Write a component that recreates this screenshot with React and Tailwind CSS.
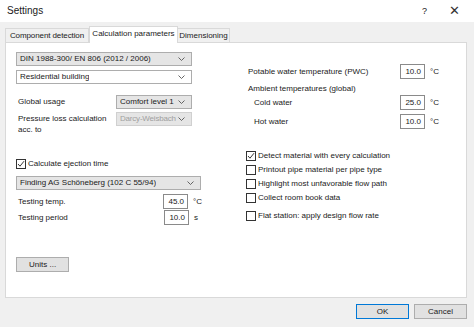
import React from "react";

function Chevron() {
    return (
        <svg width="7" height="4" viewBox="0 0 7 4" className="shrink-0">
            <polyline points="0.5,0.5 3.5,3.5 6.5,0.5" fill="none" stroke="#555" strokeWidth="0.9" />
        </svg>
    );
}

function Select({ label, className, disabled }) {
    return (
        <div className={"flex items-center justify-between gap-[2px] h-[14px] border pl-[3px] pr-[6px] whitespace-nowrap " + className}>
            <span className={"min-w-0 overflow-hidden " + (disabled ? "text-[#a0a0a0] tracking-[-0.2px]" : "text-[#1a1a1a]")}>{label}</span>
            <Chevron />
        </div>
    );
}

function Check({ checked, label }) {
    return (
        <div className="flex items-center gap-[2px] h-[11px] whitespace-nowrap">
            <div className="w-[10px] h-[10px] border border-[#333] bg-white flex items-center justify-center shrink-0">
                {checked && (
                    <svg width="8" height="8" viewBox="0 0 8 8">
                        <polyline points="1,4 3,6.2 7,1.2" fill="none" stroke="#222" strokeWidth="0.9" />
                    </svg>
                )}
            </div>
            <span>{label}</span>
        </div>
    );
}

function NumBox({ value, unit }) {
    return (
        <div className="flex items-center">
            <div className="w-[25px] h-[15px] border border-[#8a8a8a] bg-white flex items-center justify-end pr-[3px]">{value}</div>
            <span className="ml-[5px]">{unit}</span>
        </div>
    );
}

export default function App() {
    return (
        <div className="w-[474px] h-[327px] flex flex-col bg-[#f0f0f0] text-[8px] leading-[10px] text-[#1a1a1a] overflow-hidden" style={{ fontFamily: '"Liberation Sans", Arial, sans-serif' }}>
            {/* title bar */}
            <div className="h-[22px] bg-white flex items-center pl-[7px] pr-[14px] shrink-0">
                <span className="text-[10px]">Settings</span>
                <span className="ml-auto text-[9px]">?</span>
                <span className="ml-[22px] text-[13px] font-light text-[#333]">✕</span>
            </div>

            <div className="flex-1 pl-[5px] pr-[7px] flex flex-col">
                {/* tabs */}
                <div className="h-[20px] flex items-end whitespace-nowrap">
                    <div className="w-[84px] h-[14px] flex items-center justify-center border border-b-0 border-[#d9d9d9] bg-[#f0f0f0] tracking-[-0.1px]">Component detection</div>
                    <div className="w-[89px] h-[17px] flex items-start justify-center pt-[2px] border border-b-0 border-[#d9d9d9] bg-white -mb-px relative z-10">Calculation parameters</div>
                    <div className="w-[52px] h-[14px] flex items-center justify-center border border-b-0 border-l-0 border-[#d9d9d9] bg-[#f0f0f0]">Dimensioning</div>
                </div>

                {/* panel */}
                <div className="h-[256px] bg-white border border-[#d9d9d9] flex pl-[10px]">
                    {/* left column */}
                    <div className="w-[186px] flex flex-col pt-[9px]">
                        <Select label="DIN 1988-300/ EN 806 (2012 / 2006)" className="w-[176px] bg-[#e5e5e5] border-[#adadad]" />
                        <Select label="Residential building" className="w-[176px] mt-[4px] bg-white border-[#adadad]" />
                        <div className="flex items-center mt-[11px]">
                            <span className="w-[100px] pl-[2px]">Global usage</span>
                            <Select label="Comfort level 1" className="w-[76px] bg-[#e5e5e5] border-[#adadad]" />
                        </div>
                        <div className="flex items-start mt-[3px]">
                            <span className="w-[100px] pl-[2px] leading-[11px] pt-[1px]">Pressure loss calculation<br />acc. to</span>
                            <Select label="Darcy-Weisbach" disabled className="w-[76px] bg-[#e5e5e5] border-[#d0d0d0]" />
                        </div>
                        <div className="mt-[23px]">
                            <Check checked label="Calculate ejection time" />
                        </div>
                        <Select label="Finding AG Schöneberg (102 C 55/94)" className="w-[185px] mt-[7px] bg-[#e5e5e5] border-[#adadad]" />
                        <div className="flex items-center mt-[4px]">
                            <span className="w-[148px] pl-[2px]">Testing temp.</span>
                            <NumBox value="45.0" unit="°C" />
                        </div>
                        <div className="flex items-center mt-px">
                            <span className="w-[148px] pl-[2px]">Testing period</span>
                            <NumBox value="10.0" unit="s" />
                        </div>
                        <div className="mt-[32px] w-[53px] h-[15px] bg-[#e1e1e1] border border-[#adadad] flex items-center pl-[12px]">Units ...</div>
                    </div>

                    {/* right column */}
                    <div className="flex-1 flex flex-col pl-[44px] pt-[21px]">
                        <div className="flex items-center">
                            <span className="w-[154px] pl-[2px]">Potable water temperature (PWC)</span>
                            <NumBox value="10.0" unit="°C" />
                        </div>
                        <span className="pl-[2px] mt-[5px]">Ambient temperatures (global)</span>
                        <div className="flex items-center mt-[1px]">
                            <span className="w-[154px] pl-[8px]">Cold water</span>
                            <NumBox value="25.0" unit="°C" />
                        </div>
                        <div className="flex items-center mt-[4px]">
                            <span className="w-[154px] pl-[8px]">Hot water</span>
                            <NumBox value="10.0" unit="°C" />
                        </div>
                        <div className="flex flex-col gap-[3px] mt-[21px]">
                            <Check checked label="Detect material with every calculation" />
                            <Check label="Printout pipe material per pipe type" />
                            <Check label="Highlight most unfavorable flow path" />
                            <Check label="Collect room book data" />
                        </div>
                        <div className="mt-[7px]">
                            <Check label="Flat station: apply design flow rate" />
                        </div>
                    </div>
                </div>

                {/* footer */}
                <div className="flex justify-end gap-[5px] mt-[6px]">
                    <div className="w-[53px] h-[15px] bg-[#e1e1e1] border border-[#0078d7] flex items-center justify-center">OK</div>
                    <div className="w-[53px] h-[15px] bg-[#e1e1e1] border border-[#adadad] flex items-center justify-center">Cancel</div>
                </div>
            </div>
        </div>
    );
}
